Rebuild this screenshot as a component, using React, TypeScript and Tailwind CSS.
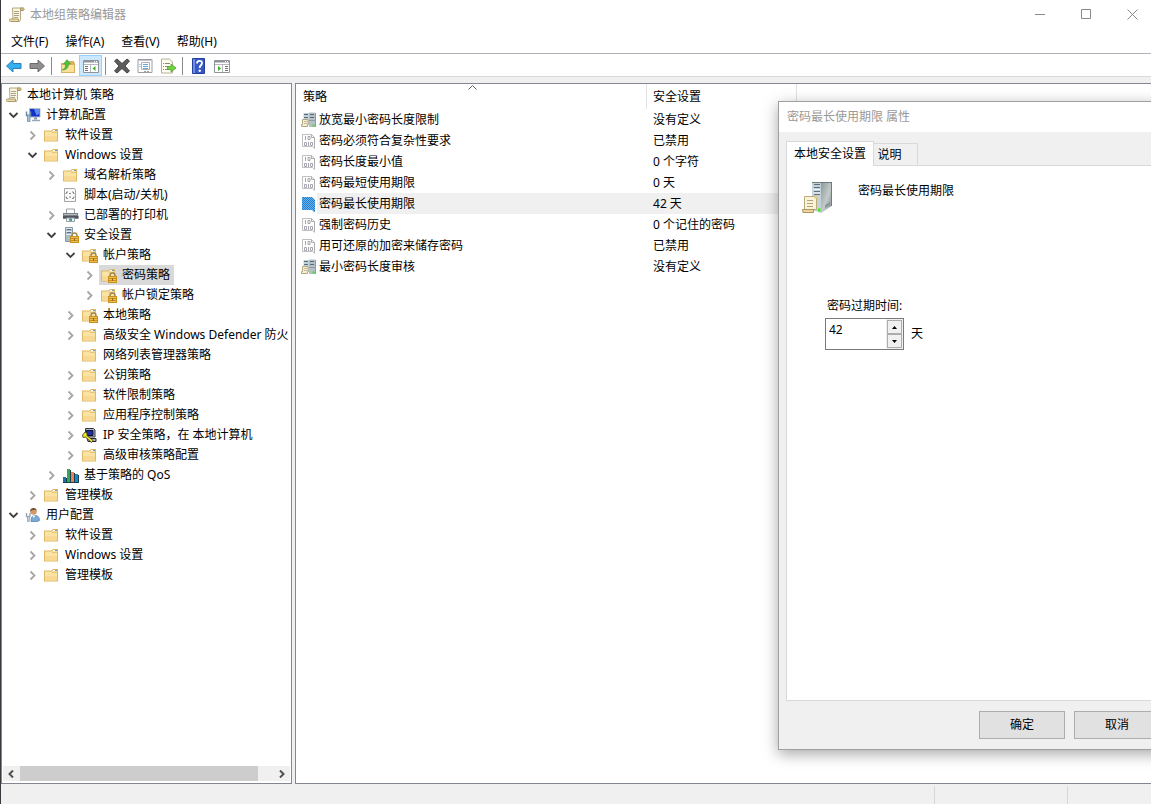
import { useState, type ReactNode } from 'react';

type IconName = keyof typeof icons;

type Node = {
  label: string;
  icon: IconName;
  leaf?: boolean;
  selected?: boolean;
  children?: Node[];
};

const padlock = (
  <g>
    <path d="M9 9.500v-1.200a2.500 2.300 0 0 1 5 0v1.200" fill="none" stroke="#a08a55" strokeWidth="1.500" />
    <path d="M7 9h9v7h-9z" fill="#c8901f" />
    <path d="M8 10.500h7M8 12.500h7M8 14.500h7" stroke="#edbf52" />
    <path d="M11 11h1v3h-1z" fill="#9c6a10" />
  </g>
);

const folderShape = (
  <g>
    <path d="M0 3.500h7.500l1.500-1.500h5v12.500h-14z" fill="#dfb766" />
    <path d="M1 4.500h7l1.500-1.500h3.500v10.500h-12z" fill="#fbe3a3" />
    <path d="M9 3.500h2" stroke="#fff" />
    <path d="M11 3.500h2" stroke="#5a9fd0" />
    <path d="M1 9h12v4.500h-12z" fill="#f7d993" />
    <path d="M8 5.500h5" stroke="#e6c374" />
  </g>
);

const icons = {
  scroll: (
    <g>
      <path d="M3.500 1h10v2.500h-2v9l-1 2h-8v-2.500h1.500z" fill="#fbf5dc" stroke="#b5a77f" />
      <path d="M11.500 1h1.500a1.300 1.300 0 0 1 1.500 2.500h-3z" fill="#d3bd82" stroke="#a08f60" strokeWidth=".8" />
      <path d="M1 12h8.500v2.500h-8a1.300 1.300 0 0 1-.5-2.500z" fill="#ecdba9" stroke="#a08f60" strokeWidth=".8" />
      <path d="M5 4.500h5M5 6.500h5M5 8.500h5M5 10.500h4" stroke="#a7a291" />
    </g>
  ),
  folder: folderShape,
  folderLock: (
    <g>
      {folderShape}
      {padlock}
    </g>
  ),
  computer: (
    <g>
      <path d="M4.500 1.500h10.500v8.500h-10.500z" fill="#1230c8" stroke="#b3bdc8" />
      <path d="M9 2h5.500v4.500l-3 2z" fill="#5d8cf0" />
      <path d="M9 10.500h3v2h-3z" fill="#8794a1" />
      <path d="M7 13.500h8" stroke="#9aa7b4" strokeWidth="1.500" />
      <path d="M1.500 4.500v4h4v-4" fill="none" stroke="#6b8aa5" strokeWidth="1.500" />
      <path d="M2.500 8h2.500v6.500h-2.500z" fill="#a9c4da" stroke="#6b8aa5" strokeWidth=".8" />
    </g>
  ),
  user: (
    <g>
      <circle cx="8.500" cy="4.500" r="3.300" fill="#cf9b6b" />
      <path d="M5.200 4.500a3.300 3.300 0 0 1 6.500-1c-2-.8-4.500-.5-6.500 1z" fill="#755236" />
      <path d="M6 14.500c0-4 1-6 4-6s4.500 2 4.500 5l-2 1z" fill="#79abd6" stroke="#5786b0" strokeWidth=".8" />
      <path d="M7.500 8.500l1 2.500 2-2.500z" fill="#fff" />
      <path d="M1.500 6v3.500h3.500v-3.500" fill="none" stroke="#96a4b1" strokeWidth="1.300" />
      <path d="M2.500 9.500h1.800v5h-1.800z" fill="#c4d1dc" stroke="#96a4b1" strokeWidth=".8" />
    </g>
  ),
  script: (
    <g>
      <path d="M1.500 1.500h10l1 1.500v11.500h-11z" fill="#fafafa" stroke="#a5a5a5" />
      <path d="M5 5h-1.500v1.500h-1M9 5h1.500v1.500h1M5 11.500h-1.500v-1.500h-1M9 11.500h1.500v-1.500h1" fill="none" stroke="#858585" />
      <path d="M6 6.500h2M6 10h2" stroke="#858585" />
    </g>
  ),
  printer: (
    <g>
      <path d="M3.500 2h8v5h-8z" fill="#fff" stroke="#9a9fa5" />
      <path d="M0 6h15l.5 6h-15.500z" fill="#7b8087" />
      <path d="M0 9h15.500v2h-15.500z" fill="#51565c" />
      <path d="M1 7.500h13" stroke="#b7bcc1" />
      <path d="M3.500 11h8v3.500h-8z" fill="#eef4f8" stroke="#9a9fa5" />
      <path d="M6 12.500h3" stroke="#3f8fcd" strokeWidth="2" />
      <path d="M7 13h2v1h-2z" fill="#4caf50" />
    </g>
  ),
  serverLock: (
    <g>
      <path d="M2.500.5h7v14h-7z" fill="#a8bcc8" stroke="#8599a5" />
      <path d="M3 1.500h6M3 4.500h6M3 7.500h6" stroke="#e0eaf0" />
      <path d="M4 2.500h4M4 5.500h4" stroke="#5c7280" />
      {padlock}
    </g>
  ),
  ipsec: (
    <g>
      <path d="M3.500 1.500h8l1.500 1.500v7h-9.500z" fill="#b7bac4" stroke="#30343e" />
      <path d="M4.500 3.500h6.500v5h-6.500z" fill="#1c2fae" stroke="#10131a" />
      <path d="M5 11.500h9v3h-8z" fill="#a9adb8" stroke="#25282e" />
      <path d="M.5 8l2.500-3 2 1v2.500l6 5-1.500 2-6-5.500-2.500.5z" fill="#f1e52c" stroke="#3d3910" strokeWidth=".8" />
    </g>
  ),
  bars: (
    <g>
      <path d="M0 10h3v6h-3z" fill="#1c70a8" />
      <path d="M4 2h3v14h-3z" fill="#36a84c" />
      <path d="M8 5h3v11h-3z" fill="#ea8056" />
      <path d="M12 7h3v9h-3z" fill="#1f86c8" />
      <path d="M3.500 11v5M7.500 3v13M11.500 6v10M15.500 8v8" stroke="#173f52" />
      <path d="M0 15.500h16" stroke="#173f52" />
    </g>
  ),
  binary: (
    <g>
      <path d="M1.500 1.500h9l3 3v11l-2-2h-10z" fill="#fdfdfd" stroke="#c0c0c0" />
      <path d="M10.500 1.500v3h3v10" fill="none" stroke="#adadad" />
      <path d="M4.500 3v4M7 3.500h2v3h-2zM3.500 9.500h2v3h-2zM7.500 9v4M9.500 9.500h2v3h-2z" fill="none" stroke="#a8a4b0" />
    </g>
  ),
  binarySelected: (
    <g>
      <defs>
        <pattern id="dither" width="2" height="2" patternUnits="userSpaceOnUse">
          <path d="M0 0h2v2h-2z" fill="#1b7fd4" />
          <path d="M0 0h1v1h-1zM1 1h1v1h-1z" fill="#6fb0e6" />
        </pattern>
      </defs>
      <path d="M1 1h10l3 3v12h-1l-2-2h-10z" fill="url(#dither)" />
    </g>
  ),
  server: (
    <g>
      <path d="M2.500 1h5.500v12h-5.500z" fill="#c3d1d9" />
      <path d="M8 .5h6v14.500h-6z" fill="#b4c0c6" />
      <path d="M3 2.500h4M3 5.500h4M9 2.500h4M9 5.500h4" stroke="#566c78" />
      <path d="M8 8.500h6M14.500 1v14" stroke="#8b9ca5" />
      <path d="M1.500 7.500h5.500v5.500h-.5v1.500h-6v-2h1z" fill="#f7eed2" stroke="#b3a57f" />
      <path d="M3 9.500h3M3 11.500h3" stroke="#c9bb98" />
      <path d="M11.500 12.500h2v2h-2z" fill="#3fe025" />
    </g>
  ),
  back: <path d="M.5 8l6.500-6v3.500h8v5h-8v3.500z" fill="#35b0ee" stroke="#2b7fb8" />,
  forward: <path d="M15.500 8l-6.500-6v3.500h-8v5h8v3.500z" fill="#8f8f8f" stroke="#6b6b6b" />,
  folderUp: (
    <g>
      <path d="M1 5h6l1.500-2h5.500v1.500h1v10.500h-14z" fill="#d9b25d" />
      <path d="M2 7h12v7h-12z" fill="#fbe09a" />
      <path d="M2 12c3-1 3.500-3 3.500-6h-2l3.500-4.500 3.500 4.500h-2c0 4-2 6-6.500 6z" fill="#4cc234" stroke="#3a9a2a" strokeWidth=".5" />
    </g>
  ),
  treePane: (
    <g>
      <path d="M.5 2.500h15v12h-15z" fill="#fff" stroke="#8f949a" />
      <path d="M1 3.500h14" stroke="#8f949a" strokeWidth="2" />
      <path d="M11 3.500h1M13 3.500h1" stroke="#fff" />
      <path d="M1 6.500h14M7.500 7v7" stroke="#b5b9be" />
      <path d="M2 8.500h3M2 10.500h3M2 12.500h3" stroke="#6e7379" />
      <path d="M12.500 8v5l-3-2.500z" fill="#43b02a" />
    </g>
  ),
  remove: <path d="M.5 3l2.500-2 5 4.500 5-4.500 2.500 2-4.500 5 4.500 5-2.500 2-5-4.500-5 4.500-2.500-2 4.500-5z" fill="#5c5c5c" stroke="#444" />,
  properties: (
    <g>
      <path d="M1 1.500h14v13h-14z" fill="#fff" stroke="#9a9ea4" />
      <path d="M1.500 2.500h13" stroke="#c3c7cc" />
      <path d="M4.500 4.500h8v7h-8z" fill="#fff" stroke="#b0b4b9" />
      <path d="M6 6.500h5M6 8.500h5M6 10.500h5M2.500 6.500h1M2.500 8.500h1" stroke="#68a3d4" />
      <path d="M7 13.500h2M10 13.500h2" stroke="#9a9ea3" />
    </g>
  ),
  exportList: (
    <g>
      <path d="M1.500 1h8l3 3v11h-11z" fill="#fffdf0" stroke="#b3ae96" />
      <path d="M3 5.500h1M5 5.500h5M3 8.500h1M5 8.500h4M3 11.500h1M5 11.500h4" stroke="#8b8772" />
      <path d="M7.500 8.500h3.500v-2.500l5 4-5 4v-2.500h-3.500z" fill="#6cd43c" stroke="#4fa62e" strokeWidth=".8" />
    </g>
  ),
  help: (
    <g>
      <path d="M1.500.5h12v15h-12z" fill="#3558c4" stroke="#24409c" />
      <path d="M2 1h2v14h-2z" fill="#6f8fe0" />
      <path d="M6 5.500c0-3.500 5-3.500 5-.5 0 2.500-2.300 2-2.300 5" fill="none" stroke="#fff" strokeWidth="1.800" />
      <circle cx="8.700" cy="12.800" r="1.200" fill="#fff" />
    </g>
  ),
  actionPane: (
    <g>
      <path d="M.5 2.500h15v12h-15z" fill="#fff" stroke="#8f949a" />
      <path d="M1 3.500h14" stroke="#8f949a" strokeWidth="2" />
      <path d="M11 3.500h1M13 3.500h1" stroke="#fff" />
      <path d="M1 6.500h14M8.500 7v7" stroke="#b5b9be" />
      <path d="M11 8.500h3M11 10.500h3M11 12.500h3" stroke="#6e7379" />
      <path d="M4 8v5l3-2.500z" fill="#43b02a" />
    </g>
  ),
};

function Icon({ name }: { name: IconName }) {
  return (
    <svg viewBox="0 0 16 16" className="w-4 h-4 shrink-0" aria-hidden="true">
      {icons[name]}
    </svg>
  );
}

const userConfig: Node[] = [
  { label: '软件设置', icon: 'folder' },
  { label: 'Windows 设置', icon: 'folder' },
  { label: '管理模板', icon: 'folder' },
];

const securityNodes: Node[] = [
  {
    label: '帐户策略',
    icon: 'folderLock',
    children: [
      { label: '密码策略', icon: 'folderLock', selected: true },
      { label: '帐户锁定策略', icon: 'folderLock' },
    ],
  },
  { label: '本地策略', icon: 'folderLock' },
  { label: '高级安全 Windows Defender 防火', icon: 'folder' },
  { label: '网络列表管理器策略', icon: 'folder', leaf: true },
  { label: '公钥策略', icon: 'folder' },
  { label: '软件限制策略', icon: 'folder' },
  { label: '应用程序控制策略', icon: 'folder' },
  { label: 'IP 安全策略，在 本地计算机', icon: 'ipsec' },
  { label: '高级审核策略配置', icon: 'folder' },
];

const tree: Node[] = [
  {
    label: '计算机配置',
    icon: 'computer',
    children: [
      { label: '软件设置', icon: 'folder' },
      {
        label: 'Windows 设置',
        icon: 'folder',
        children: [
          { label: '域名解析策略', icon: 'folder' },
          { label: '脚本(启动/关机)', icon: 'script', leaf: true },
          { label: '已部署的打印机', icon: 'printer' },
          { label: '安全设置', icon: 'serverLock', children: securityNodes },
          { label: '基于策略的 QoS', icon: 'bars' },
        ],
      },
      { label: '管理模板', icon: 'folder' },
    ],
  },
  { label: '用户配置', icon: 'user', children: userConfig },
];

const policies: { name: string; value: string; icon: IconName; selected?: boolean }[] = [
  { name: '放宽最小密码长度限制', value: '没有定义', icon: 'server' },
  { name: '密码必须符合复杂性要求', value: '已禁用', icon: 'binary' },
  { name: '密码长度最小值', value: '0 个字符', icon: 'binary' },
  { name: '密码最短使用期限', value: '0 天', icon: 'binary' },
  { name: '密码最长使用期限', value: '42 天', icon: 'binarySelected', selected: true },
  { name: '强制密码历史', value: '0 个记住的密码', icon: 'binary' },
  { name: '用可还原的加密来储存密码', value: '已禁用', icon: 'binary' },
  { name: '最小密码长度审核', value: '没有定义', icon: 'server' },
];

const toolbar: { icon: IconName; label: string; active?: boolean }[][] = [
  [{ icon: 'back', label: '后退' }, { icon: 'forward', label: '前进' }],
  [{ icon: 'folderUp', label: '上移一级' }, { icon: 'treePane', label: '显示控制台树', active: true }],
  [{ icon: 'remove', label: '删除' }, { icon: 'properties', label: '属性' }, { icon: 'exportList', label: '导出列表' }],
  [{ icon: 'help', label: '帮助' }, { icon: 'actionPane', label: '显示操作窗格' }],
];

function TreeNode({ node }: { node: Node }) {
  const [open, setOpen] = useState(Boolean(node.children));
  return (
    <li>
      <div className="flex items-center h-5">
        {node.leaf ? (
          <span className="w-[17px] shrink-0" />
        ) : (
          <button className="w-[17px] h-5 shrink-0 flex items-center" aria-label={node.label} aria-expanded={open} onClick={() => setOpen(!open)}>
            <svg viewBox="0 0 14 14" className="w-[14px] h-[14px]" fill="none" strokeWidth="1.800">
              {open ? <path d="M3.500 5l4 4 4-4" stroke="#404040" /> : <path d="M5.500 3.500l4 4-4 4" stroke="#a6a6a6" />}
            </svg>
          </button>
        )}
        <span className={`flex items-center gap-[5px] h-5 pl-[2px] pr-[4px] whitespace-nowrap ${node.selected ? 'bg-[#d9d9d9]' : ''}`}>
          <Icon name={node.icon} />
          {node.label}
        </span>
      </div>
      {open && node.children && (
        <ul className="pl-[19px]">
          {node.children.map((child) => <TreeNode key={child.label} node={child} />)}
        </ul>
      )}
    </li>
  );
}

function ScrollButton({ label, children }: { label: string; children: ReactNode }) {
  return (
    <button aria-label={label} className="w-[17px] h-[15px] flex items-center justify-center">
      <svg viewBox="0 0 8 8" className="w-2 h-2" fill="none" stroke="#505050" strokeWidth="2">{children}</svg>
    </button>
  );
}

function ServerLarge() {
  return (
    <svg viewBox="0 0 32 34" className="w-8 h-[34px]" aria-hidden="true">
      <defs>
        <linearGradient id="side" x1="0" y1="0" x2="1" y2="1">
          <stop offset="0" stopColor="#8e9898" />
          <stop offset=".55" stopColor="#c3cbca" />
          <stop offset="1" stopColor="#7f8a8a" />
        </linearGradient>
      </defs>
      <path d="M10 2h9v31l-9-3z" fill="#c3d1d9" />
      <path d="M19 2h10.500v24l-10.500 7z" fill="url(#side)" />
      <path d="M10 2.500h19.500M29.500 2v24" stroke="#6e7a7c" />
      <path d="M12 4.500h6M12 7.500h6M12 11.500h6M12 14.500h6" stroke="#5c7180" />
      <path d="M11 9.500h7M11 13h7" stroke="#edf4f7" />
      <path d="M23 28v-3l5-3v3z" fill="#8c9696" />
      <path d="M2.500 16.500h12v13h-12z" fill="#fbf3d6" stroke="#bcab7a" />
      <path d="M12.500 15.500h3v3h-3z" fill="#e0c888" />
      <path d="M.5 29.500h11v3h-10.500z" fill="#ead7a0" stroke="#ab965d" />
      <path d="M5 20.500h6M5 23.500h6M5 26.500h6" stroke="#aea17b" />
      <path d="M16 28.500h2.500v3h-2.500z" fill="#48e41f" />
    </svg>
  );
}

function PropertiesDialog() {
  const [days, setDays] = useState(42);
  return (
    <section
      role="dialog"
      aria-labelledby="dialog-title"
      className="absolute left-[777px] top-[101px] w-[486px] h-[649px] flex flex-col border border-[#a0a0a0] bg-[#f0f0f0] shadow-[0_4px_14px_rgba(0,0,0,0.35)]"
    >
      <h2 id="dialog-title" className="h-[30px] shrink-0 bg-white px-2 leading-[30px] text-[#999]">密码最长使用期限 属性</h2>
      <div role="tablist" className="flex items-end h-[33px] shrink-0 px-[7px]">
        <button role="tab" aria-selected="true" className="relative z-10 h-[25px] -mb-px w-[88px] bg-white border border-b-0 border-[#d9d9d9]">本地安全设置</button>
        <button role="tab" aria-selected="false" className="h-[22px] w-11 pr-3 border border-l-0 border-b-0 border-[#d9d9d9]">说明</button>
      </div>
      <div role="tabpanel" className="flex-1 mx-[7px] bg-white border border-[#d9d9d9]">
        <div className="flex gap-6 pl-[15px] pt-[14px]">
          <ServerLarge />
          <p className="pt-px leading-5">密码最长使用期限</p>
        </div>
        <div className="pl-[38px] pt-[82px]">
          <label htmlFor="days" className="block pl-0.5 leading-5">密码过期时间:</label>
          <div className="flex items-center gap-[7px] pt-0.5">
            <div className="flex w-[79px] h-8 border border-[#7a7a7a] bg-white">
              <input id="days" inputMode="numeric" value={days} onChange={(e) => setDays(Number(e.target.value) || 0)} className="w-0 flex-1 pl-[3px] pb-2 outline-none" />
              <div className="flex flex-col w-[17px] p-px bg-[#f0f0f0]">
                <button aria-label="增加" onClick={() => setDays(days + 1)} className="flex-1 flex items-center justify-center border border-[#acacac]">
                  <svg viewBox="0 0 5 3" className="w-[5px] h-[3px]"><path d="M0 3L2.500 0 5 3z" /></svg>
                </button>
                <button aria-label="减少" onClick={() => setDays(days - 1)} className="flex-1 flex items-center justify-center border border-[#acacac]">
                  <svg viewBox="0 0 5 3" className="w-[5px] h-[3px]"><path d="M0 0L2.500 3 5 0z" /></svg>
                </button>
              </div>
            </div>
            <span>天</span>
          </div>
        </div>
      </div>
      <div className="flex gap-[9px] pl-[200px] pt-2.5 pb-2.5">
        {['确定', '取消'].map((label) => (
          <button key={label} className="w-[86px] h-7 bg-[#e1e1e1] border border-[#adadad]">{label}</button>
        ))}
      </div>
    </section>
  );
}

export default function App() {
  return (
    <div className="relative flex flex-col h-screen overflow-hidden border-l border-[#3a3940] bg-[#f0f0f0] text-black text-[12px] leading-4 font-['Noto_Sans','Noto_Sans_CJK_SC',sans-serif]">
      <header className="flex items-center h-[30px] shrink-0 bg-white pl-2">
        <Icon name="scroll" />
        <h1 className="flex-1 pl-[5px] text-[#999]">本地组策略编辑器</h1>
        <div className="flex -mr-1 pb-[2px] text-[#888]">
          <button aria-label="最小化" className="w-[46px] h-7 flex items-center justify-center">
            <svg viewBox="0 0 11 11" className="w-[11px] h-[11px]" stroke="currentColor"><path d="M0 5.500h10" /></svg>
          </button>
          <button aria-label="最大化" className="w-[46px] h-7 flex items-center justify-center">
            <svg viewBox="0 0 11 11" className="w-[11px] h-[11px]" stroke="currentColor" fill="none"><path d="M.5.5h9v9h-9z" /></svg>
          </button>
          <button aria-label="关闭" className="w-[46px] h-7 flex items-center justify-center">
            <svg viewBox="0 0 11 11" className="w-[11px] h-[11px]" stroke="currentColor"><path d="M.5.5l10 10M10.500.5l-10 10" /></svg>
          </button>
        </div>
      </header>

      <nav className="flex items-center gap-[17px] h-[24px] shrink-0 bg-white pl-[10px] border-b border-[#b0b3ba]">
        {['文件(F)', '操作(A)', '查看(V)', '帮助(H)'].map((item) => <button key={item}>{item}</button>)}
      </nav>

      <div role="toolbar" className="flex items-end h-[23px] shrink-0 bg-white pl-px border-b border-[#d9d9d9]">
        {toolbar.map((group, i) => (
          <div key={i} className="flex items-center">
            {i > 0 && <span className="w-px h-[18px] ml-[3px] mr-[4px] bg-[#8a8a8a]" />}
            {group.map((tool) => (
              <button
                key={tool.label}
                aria-label={tool.label}
                className={`w-[23px] h-[21px] flex items-center justify-center ${tool.active ? 'bg-[#cce8ff] border border-[#99d1ff]' : ''}`}
              >
                <Icon name={tool.icon} />
              </button>
            ))}
          </div>
        ))}
      </div>

      <main className="flex flex-1 min-h-0 gap-[3px] pt-[6px]">
        <aside className="flex flex-col w-[291px] shrink-0 bg-white border border-[#828790]">
          <div className="flex-1 min-h-0 pt-px overflow-hidden">
            <div className="flex items-center gap-[5px] h-5 pl-1">
              <Icon name="scroll" />
              本地计算机 策略
            </div>
            <ul className="pl-1">
              {tree.map((node) => <TreeNode key={node.label} node={node} />)}
            </ul>
          </div>
          <div className="flex h-[15px] mx-px mb-[2px] bg-[#f0f0f0]">
            <ScrollButton label="向左滚动"><path d="M5 0.500L1.500 4 5 7.500" /></ScrollButton>
            <div className="flex-1"><div className="w-[94%] h-[15px] bg-[#cdcdcd]" /></div>
            <ScrollButton label="向右滚动"><path d="M2 0.500L5.500 4 2 7.500" /></ScrollButton>
          </div>
        </aside>

        <div className="relative flex-1 min-w-0 bg-white border border-r-0 border-[#828790]">
          <svg viewBox="0 0 9 5" className="absolute left-[172px] top-px w-[9px] h-[5px]" fill="none" stroke="#606060"><path d="M.5 4.500l4-4 4 4" /></svg>
          <table className="w-full table-fixed border-separate border-spacing-0 text-left">
            <colgroup>
              <col className="w-[21px]" />
              <col className="w-[330px]" />
              <col className="w-[150px]" />
              <col />
            </colgroup>
            <thead>
              <tr className="h-[25px]">
                <th colSpan={2} className="p-0 pl-[7px] font-normal border-r border-[#e2e2e2]">策略</th>
                <th className="p-0 pl-1.5 font-normal border-r border-[#e2e2e2]">安全设置</th>
                <th className="p-0" />
              </tr>
            </thead>
            <tbody>
              {policies.map((policy) => {
                const bg = policy.selected ? 'bg-[#f0f0f0]' : '';
                return (
                  <tr key={policy.name} className="h-[21px]">
                    <td className="p-0 pl-[5px]"><Icon name={policy.icon} /></td>
                    <td className={`p-0 pl-[2px] ${bg}`}>{policy.name}</td>
                    <td className={`p-0 pl-1.5 ${bg}`}>{policy.value}</td>
                    <td className={`p-0 ${bg}`} />
                  </tr>
                );
              })}
            </tbody>
          </table>
        </div>
      </main>

      <footer className="flex justify-end h-5 shrink-0 pt-[2px]">
        <span className="w-[133px] border-l border-[#d7d7d7]" />
        <span className="w-[84px] border-l border-[#d7d7d7]" />
      </footer>

      <PropertiesDialog />
    </div>
  );
}
